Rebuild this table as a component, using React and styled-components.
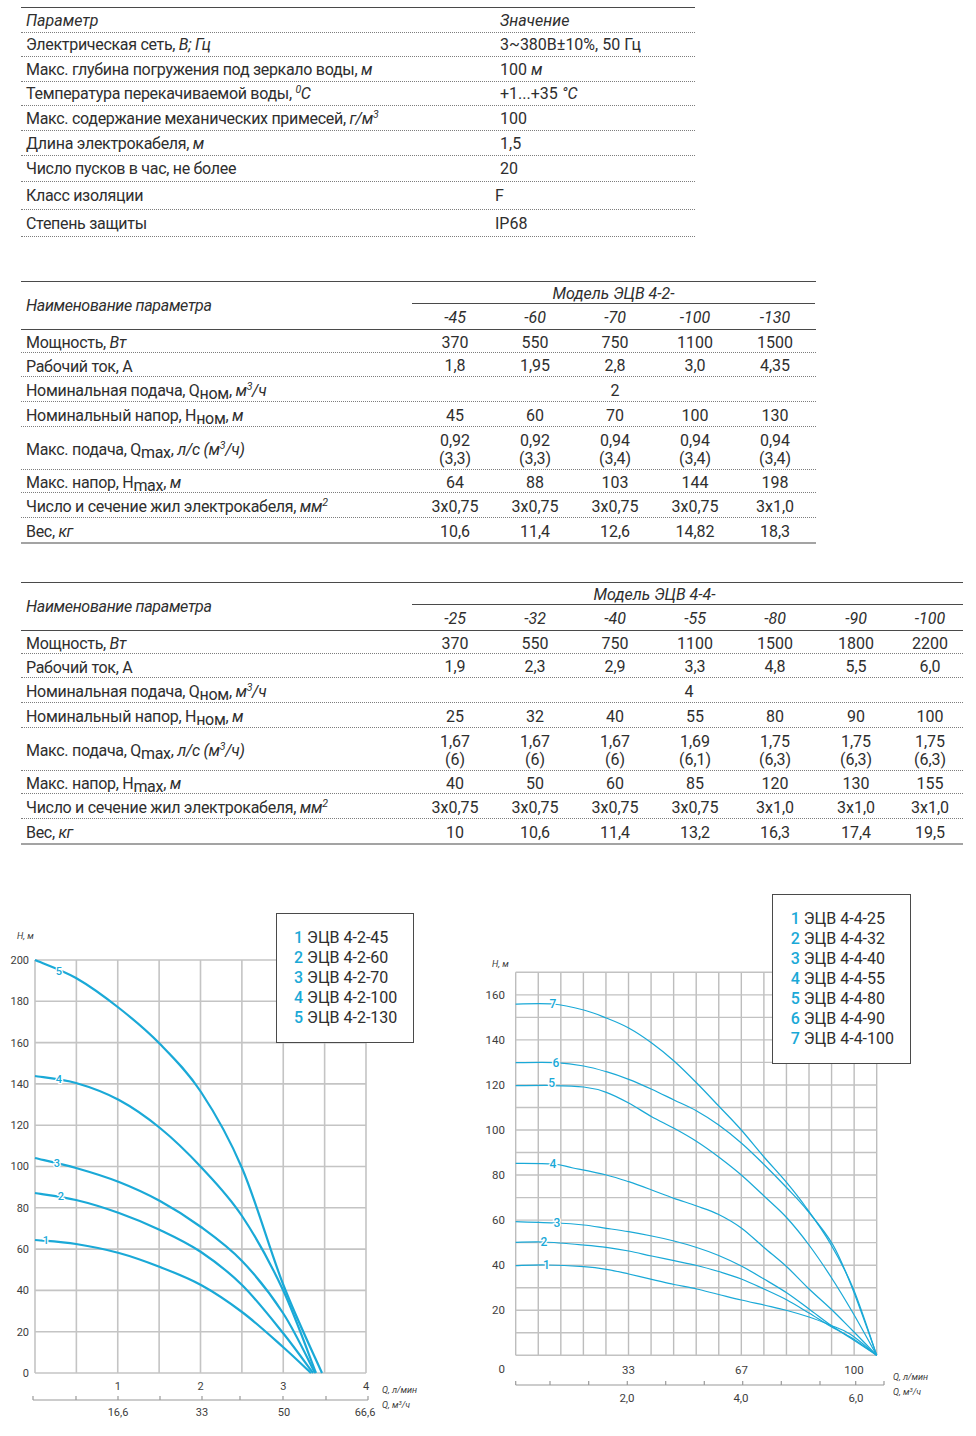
import React from 'react'
import styled, { createGlobalStyle } from 'styled-components'

const CYAN = '#1aa9d7'

const GlobalStyle = createGlobalStyle`
  *, *::before, *::after { box-sizing: border-box; }
  body {
    margin: 0;
    background: #fff;
    color: #2e2e2e;
    font-family: Roboto, "Liberation Sans", sans-serif;
    font-size: 16px;
  }
`

const Page = styled.div`
  width: 976px;
  height: 1436px;
  padding: 7px 0 0 21px;
  overflow: hidden;
`

/* ---------- text bits ---------- */
const I = styled.i`
  font-style: italic;
`
const Sup = styled.sup`
  font-size: 10.5px;
  font-style: italic;
  vertical-align: 6px;
  line-height: 0;
`
const Low = styled.span`
  display: inline-block;
  transform: translateY(3px);
`

/* ---------- parameter table ---------- */
const SpecTable = styled.div`
  width: 674px;
  border-top: 1px solid #4a4a4a;
`
const SpecRow = styled.div`
  display: grid;
  grid-template-columns: 474px 1fr;
  align-items: center;
  height: ${p => p.$h}px;
  border-bottom: 1px dotted #7d7d7d;
  font-style: ${p => (p.$head ? 'italic' : 'normal')};
`
const SpecCell = styled.div`
  padding-left: ${p => (p.$shift ? 0 : 5)}px;
  white-space: nowrap;
  letter-spacing: ${p => (p.$tight ? '-0.3px' : '0')};
`

/* ---------- model tables ---------- */
const ModelTable = styled.div`
  width: ${p => p.$width}px;
  margin-top: ${p => p.$top}px;
`
const ModelHead = styled.div`
  display: grid;
  grid-template-columns: ${p => p.$cols};
  grid-template-rows: 22px 25px;
  border-top: 1px solid #4a4a4a;
  border-bottom: 1px solid #4a4a4a;
  height: 49px;
  font-style: italic;
`
const HeadName = styled.div`
  grid-row: 1 / 3;
  align-self: center;
  padding-left: 5px;
  letter-spacing: -0.3px;
`
const ModelTitle = styled.div`
  grid-column: 2 / -1;
  display: flex;
  align-items: center;
  justify-content: center;
  padding: 2px ${p => p.$padRight || 0}px 0 0;
  margin-left: -3px;
  border-bottom: 1px solid #4a4a4a;
`
const SubHead = styled.div`
  display: flex;
  align-items: center;
  justify-content: center;
  padding-top: 2px;
`
const DataRow = styled.div`
  display: grid;
  grid-template-columns: ${p => p.$cols};
  align-items: center;
  height: ${p => p.$h}px;
  padding-top: 3px;
  border-bottom: ${p => (p.$last ? '2px solid #a3a3a3' : '1px dotted #7d7d7d')};
`
const RowLabel = styled.div`
  padding-left: 5px;
  white-space: nowrap;
  letter-spacing: -0.3px;
`
const Value = styled.div`
  grid-column: ${p => (p.$span ? '2 / -1' : 'auto')};
  text-align: center;
  line-height: 18px;
  white-space: nowrap;
`

/* ---------- charts ---------- */
const ChartsRow = styled.div`
  display: flex;
  gap: 50px;
  margin: 35px 0 0 -21px;
`
const ChartBox = styled.div`
  position: relative;
  width: ${p => p.$w}px;
  height: 556px;
  flex: none;
`
const Legend = styled.div`
  position: absolute;
  left: ${p => p.$x}px;
  top: ${p => p.$y}px;
  width: ${p => p.$w}px;
  padding: 14px 0 14px ${p => p.$pad}px;
  background: #fff;
  border: 1.3px solid #4a4a4a;
  font-size: 16px;
  line-height: 20px;
  color: #2e2e2e;
`
const LegendItem = styled.div`
  white-space: nowrap;
`
const LegendNum = styled.span`
  color: ${CYAN};
  font-weight: 500;
  margin-right: 4px;
`
const AxisText = styled.text`
  font-family: Roboto, "Liberation Sans", sans-serif;
  font-size: ${p => p.$size || 11}px;
  font-style: ${p => (p.$italic ? 'italic' : 'normal')};
  fill: #3d3d3d;
`
const CurveLabel = styled.text`
  font-family: Roboto, "Liberation Sans", sans-serif;
  font-size: ${p => p.$size}px;
  font-weight: 500;
  fill: ${CYAN};
  stroke: #fff;
  stroke-width: 2.5px;
  paint-order: stroke;
`

/* ---------- data ---------- */
const specRows = [
  [24, <>Электрическая сеть, <I>В; Гц</I></>, '3~380В±10%, 50 Гц'],
  [25, <>Макс. глубина погружения под зеркало воды, <I>м</I></>, <>100 <I>м</I></>],
  [24, <>Температура перекачиваемой воды, <I><Sup>0</Sup>C</I></>, <>+1...+35 <I>°C</I></>],
  [25, <>Макс. содержание механических примесей, <I>г/м<Sup>3</Sup></I></>, '100'],
  [25, <>Длина электрокабеля, <I>м</I></>, '1,5'],
  [26, 'Число пусков в час, не более', '20'],
  [28, 'Класс изоляции', 'F', true],
  [27, 'Степень защиты', 'IP68', true],
]

const m3h = <I>м<Sup>3</Sup>/ч</I>
const rowLabels = [
  <>Мощность, <I>Вт</I></>,
  'Рабочий ток, А',
  <>Номинальная подача, Q<Low>ном</Low>, {m3h}</>,
  <>Номинальный напор, H<Low>ном</Low>, <I>м</I></>,
  <>Макс. подача, Q<Low>max</Low>, <I>л/с (м<Sup>3</Sup>/ч)</I></>,
  <>Макс. напор, H<Low>max</Low>, <I>м</I></>,
  <>Число и сечение жил электрокабеля, <I>мм<Sup>2</Sup></I></>,
  <>Вес, <I>кг</I></>,
]
const rowHeights = [23, 24, 25, 25, 43, 23, 25, 26]

const model42 = {
  title: 'Модель ЭЦВ 4-2-',
  cols: '394px repeat(5, 80px)',
  width: 795,
  suffixes: ['-45', '-60', '-70', '-100', '-130'],
  nominal: '2',
  rows: [
    ['370', '550', '750', '1100', '1500'],
    ['1,8', '1,95', '2,8', '3,0', '4,35'],
    null,
    ['45', '60', '70', '100', '130'],
    [['0,92', '(3,3)'], ['0,92', '(3,3)'], ['0,94', '(3,4)'], ['0,94', '(3,4)'], ['0,94', '(3,4)']],
    ['64', '88', '103', '144', '198'],
    ['3x0,75', '3x0,75', '3x0,75', '3x0,75', '3x1,0'],
    ['10,6', '11,4', '12,6', '14,82', '18,3'],
  ],
}

const model44 = {
  title: 'Модель ЭЦВ 4-4-',
  cols: '394px repeat(5, 80px) 82px 66px',
  width: 942,
  padRight: 66,
  suffixes: ['-25', '-32', '-40', '-55', '-80', '-90', '-100'],
  nominal: '4',
  rows: [
    ['370', '550', '750', '1100', '1500', '1800', '2200'],
    ['1,9', '2,3', '2,9', '3,3', '4,8', '5,5', '6,0'],
    null,
    ['25', '32', '40', '55', '80', '90', '100'],
    [['1,67', '(6)'], ['1,67', '(6)'], ['1,67', '(6)'], ['1,69', '(6,1)'], ['1,75', '(6,3)'], ['1,75', '(6,3)'], ['1,75', '(6,3)']],
    ['40', '50', '60', '85', '120', '130', '155'],
    ['3x0,75', '3x0,75', '3x0,75', '3x0,75', '3x1,0', '3x1,0', '3x1,0'],
    ['10', '10,6', '11,4', '13,2', '16,3', '17,4', '19,5'],
  ],
}

function Models({ m, top }) {
  return (
    <ModelTable $width={m.width} $top={top}>
      <ModelHead $cols={m.cols}>
        <HeadName>Наименование параметра</HeadName>
        <ModelTitle $padRight={m.padRight}>{m.title}</ModelTitle>
        {m.suffixes.map(s => <SubHead key={s}>{s}</SubHead>)}
      </ModelHead>
      {rowLabels.map((label, r) => (
        <DataRow key={r} $cols={m.cols} $h={rowHeights[r]} $last={r === rowLabels.length - 1}>
          <RowLabel>{label}</RowLabel>
          {m.rows[r] === null
            ? <Value $span>{m.nominal}</Value>
            : m.rows[r].map((v, c) => (
              <Value key={c}>{Array.isArray(v) ? <>{v[0]}<br />{v[1]}</> : v}</Value>
            ))}
        </DataRow>
      ))}
    </ModelTable>
  )
}

/* smooth path through points (catmull-rom) */
function smooth(pts) {
  let d = `M${pts[0][0]},${pts[0][1]}`
  for (let i = 0; i < pts.length - 1; i++) {
    const p0 = pts[i - 1] || pts[i]
    const p1 = pts[i]
    const p2 = pts[i + 1]
    const p3 = pts[i + 2] || p2
    const c1 = [p1[0] + (p2[0] - p0[0]) / 6, p1[1] + (p2[1] - p0[1]) / 6]
    const c2 = [p2[0] - (p3[0] - p1[0]) / 6, p2[1] - (p3[1] - p1[1]) / 6]
    d += ` C${c1[0].toFixed(1)},${c1[1].toFixed(1)} ${c2[0].toFixed(1)},${c2[1].toFixed(1)} ${p2[0]},${p2[1]}`
  }
  return d
}

const range = n => Array.from({ length: n }, (_, i) => i)

/* curves in page coordinates */
const leftCurves = [
  { n: 1, at: [46, 1240], pts: [[35, 1240], [76, 1244], [119, 1253], [160, 1267], [201, 1285], [242, 1312], [283, 1347], [311, 1373]] },
  { n: 2, at: [61, 1196], pts: [[35, 1193], [76, 1200], [119, 1213], [160, 1230], [201, 1252], [242, 1285], [283, 1333], [313, 1373]] },
  { n: 3, at: [57, 1163], pts: [[35, 1158], [76, 1168], [119, 1182], [160, 1201], [201, 1227], [242, 1261], [283, 1313], [315, 1373]] },
  { n: 4, at: [59, 1079], pts: [[35, 1076], [76, 1083], [119, 1100], [160, 1128], [201, 1167], [242, 1216], [283, 1290], [316, 1373]] },
  { n: 5, at: [59, 971], pts: [[35, 960], [76, 978], [119, 1008], [160, 1044], [201, 1092], [242, 1168], [283, 1284], [322, 1373]] },
]

const rightCurves = [
  { n: 1, at: [546.5, 1264.5], pts: [[515.7, 1265.7], [546, 1265], [583.7, 1266.7], [606.3, 1269.3], [628.7, 1274], [651.7, 1279.3], [674, 1284.5], [696.7, 1289], [718.7, 1294.5], [741.3, 1300], [764, 1305], [787, 1310.5], [809, 1317], [830, 1325], [850, 1334], [876.7, 1355.3]] },
  { n: 2, at: [544, 1241.5], pts: [[515.7, 1242.3], [544, 1242], [583.7, 1245], [606.3, 1247.3], [628.7, 1251], [651.7, 1256], [674, 1260.7], [696.7, 1265.5], [718.7, 1271.5], [741.3, 1279], [764, 1289], [787, 1300], [809, 1313], [830, 1326], [852, 1338], [876.7, 1355.3]] },
  { n: 3, at: [557, 1223], pts: [[515.7, 1221.7], [557, 1223], [583.7, 1225], [606.3, 1228.3], [628.7, 1231.7], [651.7, 1236], [674, 1241], [696.7, 1247.5], [718.7, 1255.5], [741.3, 1266], [764, 1279], [787, 1293], [809, 1309], [832, 1326], [852, 1339], [876.7, 1355.3]] },
  { n: 4, at: [553, 1164], pts: [[515.7, 1163.3], [553, 1164], [573, 1168], [606.3, 1175], [628.7, 1181.7], [651.7, 1190], [674, 1198.3], [696.7, 1206], [718.7, 1214.5], [741.3, 1228], [764, 1247.5], [787, 1267], [808, 1288], [832, 1310], [853, 1331], [876.7, 1355.3]] },
  { n: 5, at: [551.7, 1083], pts: [[515.7, 1085.7], [551.7, 1085.5], [583.7, 1087], [606.3, 1092.3], [628.7, 1103], [651.7, 1116.7], [674, 1128.3], [696.7, 1141.5], [718.7, 1157], [741.3, 1175], [764, 1196], [787, 1218], [809, 1245], [831, 1277], [853, 1313], [876.7, 1355.3]] },
  { n: 6, at: [556, 1062.5], pts: [[515.7, 1062.7], [556, 1062.7], [583.7, 1066], [606.3, 1071.7], [628.7, 1079.3], [651.7, 1089.3], [674, 1100], [696.7, 1111], [718.7, 1125], [741.3, 1143], [764, 1164.5], [787, 1188], [807, 1210], [833, 1245], [853, 1290], [876.7, 1355.3]] },
  { n: 7, at: [553, 1003.5], pts: [[515.7, 1004], [553, 1004], [583.7, 1010], [606.3, 1018], [628.7, 1028], [651.7, 1043], [674, 1061], [696.7, 1083], [718.7, 1106], [741.3, 1130], [764, 1157], [787, 1183], [805, 1206], [830, 1243], [853, 1288], [876.7, 1355.3]] },
]

function LeftChart() {
  const X0 = 35, X1 = 366, Y0 = 960, Y1 = 1373
  const dx = (X1 - X0) / 8, dy = (Y1 - Y0) / 10
  return (
    <svg width="420" height="556" viewBox="0 880 420 556">
      {range(9).map(i => (
        <line key={'v' + i} x1={X0 + i * dx} x2={X0 + i * dx} y1={Y0} y2={Y1} stroke="#c4c4c4" strokeWidth="1.6" />
      ))}
      {range(11).map(j => (
        <line key={'h' + j} x1={X0} x2={X1} y1={Y0 + j * dy} y2={Y0 + j * dy} stroke="#c4c4c4" strokeWidth="1.6" />
      ))}
      {range(11).map(j => (
        <AxisText key={'y' + j} x="29" y={Y0 + j * dy} dy="0.36em" textAnchor="end">{200 - j * 20}</AxisText>
      ))}
      <AxisText x="17" y="936" dy="0.35em" $size={9} $italic>H, м</AxisText>
      {[1, 2, 3, 4].map(q => (
        <AxisText key={'q' + q} x={X0 + q * 2 * dx} y="1386" dy="0.36em" textAnchor="middle">{q}</AxisText>
      ))}
      <line x1="33" x2="368" y1="1400" y2="1400" stroke="#9a9a9a" strokeWidth="1.2" />
      {[33, 76, 118, 160, 202, 240, 283, 326, 368].map(x => (
        <line key={'t' + x} x1={x} x2={x} y1="1400" y2="1396" stroke="#9a9a9a" strokeWidth="1.2" />
      ))}
      {[['16,6', 118], ['33', 202], ['50', 284], ['66,6', 365]].map(([t, x]) => (
        <AxisText key={'b' + t} x={x} y="1412" dy="0.36em" textAnchor="middle">{t}</AxisText>
      ))}
      <AxisText x="382" y="1390" dy="0.35em" $size={9} $italic>Q, л/мин</AxisText>
      <AxisText x="382" y="1405" dy="0.35em" $size={9} $italic>Q, м<tspan dy="-3" fontSize="6">3</tspan><tspan dy="3">/ч</tspan></AxisText>
      {leftCurves.map(c => (
        <path key={'c' + c.n} d={smooth(c.pts)} fill="none" stroke={CYAN} strokeWidth="2.2" />
      ))}
      {leftCurves.map(c => (
        <CurveLabel key={'l' + c.n} x={c.at[0]} y={c.at[1]} dy="0.36em" textAnchor="middle" $size={11}>{c.n}</CurveLabel>
      ))}
    </svg>
  )
}

function RightChart() {
  const X0 = 515.7, X1 = 876.7, Y0 = 972.3, Y1 = 1355.3
  const dx = (X1 - X0) / 16, dy = (Y1 - Y0) / 17
  return (
    <svg width="506" height="556" viewBox="470 880 506 556">
      {range(17).map(i => (
        <line key={'v' + i} x1={X0 + i * dx} x2={X0 + i * dx} y1={Y0} y2={Y1} stroke="#bdbdbd" strokeWidth="1.4" />
      ))}
      {range(18).map(j => (
        <line key={'h' + j} x1={X0} x2={X1} y1={Y0 + j * dy} y2={Y0 + j * dy} stroke="#c2c2c2" strokeWidth="1.4" />
      ))}
      {[160, 140, 120, 100, 80, 60, 40, 20].map(h => (
        <AxisText key={'y' + h} x="505" y={Y1 - h * dy / 10} dy="0.36em" textAnchor="end" $size={11.5}>{h}</AxisText>
      ))}
      <AxisText x="505" y="1369" dy="0.36em" textAnchor="end" $size={11.5}>0</AxisText>
      <AxisText x="492" y="964" dy="0.35em" $size={9} $italic>H, м</AxisText>
      {[['33', 628.5], ['67', 741.5], ['100', 854]].map(([t, x]) => (
        <AxisText key={'q' + t} x={x} y="1370" dy="0.36em" textAnchor="middle" $size={11.5}>{t}</AxisText>
      ))}
      <line x1={X0} x2="884" y1="1385" y2="1385" stroke="#9a9a9a" strokeWidth="1.2" />
      {[515.7, 550, 588.7, 627.3, 665.7, 704.3, 742.7, 781.3, 820, 855.7, 884].map(x => (
        <line key={'t' + x} x1={x} x2={x} y1="1385" y2="1381" stroke="#9a9a9a" strokeWidth="1.2" />
      ))}
      {[['2,0', 627], ['4,0', 741], ['6,0', 856]].map(([t, x]) => (
        <AxisText key={'b' + t} x={x} y="1398" dy="0.36em" textAnchor="middle" $size={11.5}>{t}</AxisText>
      ))}
      <AxisText x="893" y="1377" dy="0.35em" $size={9} $italic>Q, л/мин</AxisText>
      <AxisText x="893" y="1392" dy="0.35em" $size={9} $italic>Q, м<tspan dy="-3" fontSize="6">3</tspan><tspan dy="3">/ч</tspan></AxisText>
      {rightCurves.map(c => (
        <path key={'c' + c.n} d={smooth(c.pts)} fill="none" stroke={CYAN} strokeWidth="1.25" />
      ))}
      {rightCurves.map(c => (
        <CurveLabel key={'l' + c.n} x={c.at[0]} y={c.at[1]} dy="0.36em" textAnchor="middle" $size={12}>{c.n}</CurveLabel>
      ))}
    </svg>
  )
}

export default function App() {
  return (
    <Page>
      <GlobalStyle />
      <SpecTable>
        <SpecRow $h={25} $head>
          <SpecCell>Параметр</SpecCell>
          <SpecCell>Значение</SpecCell>
        </SpecRow>
        {specRows.map(([h, label, value, shift], i) => (
          <SpecRow key={i} $h={h}>
            <SpecCell $tight>{label}</SpecCell>
            <SpecCell $shift={shift}>{value}</SpecCell>
          </SpecRow>
        ))}
      </SpecTable>

      <Models m={model42} top={44} />
      <Models m={model44} top={38} />

      <ChartsRow>
        <ChartBox $w={420}>
          <LeftChart />
          <Legend $x={276} $y={33} $w={138} $pad={17}>
            {['45', '60', '70', '100', '130'].map((s, i) => (
              <LegendItem key={s}><LegendNum>{i + 1}</LegendNum>ЭЦВ 4-2-{s}</LegendItem>
            ))}
          </Legend>
        </ChartBox>
        <ChartBox $w={506}>
          <RightChart />
          <Legend $x={301.7} $y={14} $w={139} $pad={18}>
            {['25', '32', '40', '55', '80', '90', '100'].map((s, i) => (
              <LegendItem key={s}><LegendNum>{i + 1}</LegendNum>ЭЦВ 4-4-{s}</LegendItem>
            ))}
          </Legend>
        </ChartBox>
      </ChartsRow>
    </Page>
  )
}
